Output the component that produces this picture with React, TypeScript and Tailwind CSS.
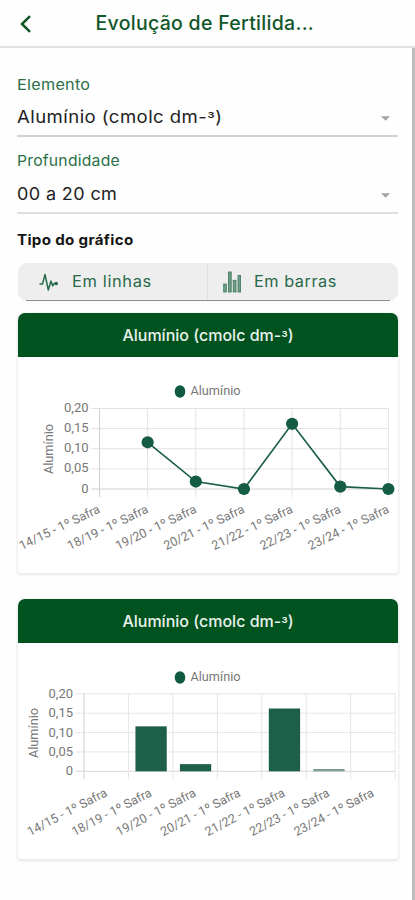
import { ReactNode } from 'react';

interface Entry {
    label: string;
    value: number | null;
}

const TICKS = ['0,20', '0,15', '0,10', '0,05', '0'];

const DATA: Entry[] = [
    { label: '14/15 - 1º Safra', value: null },
    { label: '18/19 - 1º Safra', value: 0.116 },
    { label: '19/20 - 1º Safra', value: 0.0185 },
    { label: '20/21 - 1º Safra', value: 0 },
    { label: '21/22 - 1º Safra', value: 0.162 },
    { label: '22/23 - 1º Safra', value: 0.006 },
    { label: '23/24 - 1º Safra', value: 0 },
];

function UnitTitle() {
    return <>Alumínio (cmolc dm-<span className="align-[-1.5px] text-[0.9em] leading-none">³</span>)</>;
}

function ElementField() {
    return (
        <div className="h-[62px] border-b-2 border-[#d2d2d2]">
            <div className="h-5 w-max origin-left scale-x-[1.08] text-[15px] leading-5 tracking-[0.25px] text-[#2b7049]">Elemento</div>
            <div className="mt-[11px] flex h-6 items-center justify-between pr-[8px] text-[#222]">
                <span className="origin-left scale-x-[1.09] text-[17px] tracking-[0.42px]"><UnitTitle /></span>
                <Caret />
            </div>
        </div>
    );
}

function DepthField() {
    return (
        <div className="h-[77px] border-b-2 border-[#dedede] pt-[14px]">
            <div className="h-5 w-max origin-left scale-x-[1.05] text-[15px] leading-5 tracking-[0.2px] text-[#2b7049]">Profundidade</div>
            <div className="mt-[12px] flex h-6 items-center justify-between pr-[8px] text-[#222]">
                <span className="origin-left scale-x-[1.06] text-[17px] tracking-[0.35px]">00 a 20 cm</span>
                <Caret />
            </div>
        </div>
    );
}

function Caret() {
    return (
        <svg width="9" height="5" viewBox="0 0 10 5">
            <path d="M0 0h10L5 5z" fill="#a3a3a3" />
        </svg>
    );
}

function ChartCard({ children }: { children: ReactNode }) {
    return (
        <section className="h-[260px] overflow-hidden rounded-t-[7px] rounded-b-[3px] bg-white shadow-[0_1px_3px_1px_rgba(0,0,0,0.09)]">
            <h2 className="flex h-[44px] items-center justify-center bg-[#00521f] text-[16px] font-medium text-[#e9f2ec]">
                <span><UnitTitle /></span>
            </h2>
            {children}
        </section>
    );
}

// legenda e titulo do eixo Y, iguais nos dois graficos
function Legend({ axisX, axisY }: { axisX: number; axisY: number }) {
    return (
        <>
            <ellipse cx="162" cy="34.5" rx="5.3" ry="6.2" fill="#0f5a41" />
            <text x="172.5" y="38" fontSize="13" textLength="50" lengthAdjust="spacingAndGlyphs">Alumínio</text>
            <text transform={`translate(${axisX} ${axisY}) rotate(-90)`} fontSize="12.5" textLength="50" lengthAdjust="spacingAndGlyphs">
                Alumínio
            </text>
        </>
    );
}

function LineChart() {
    const left = 81.5;
    const top = 51.5;
    const height = 80.5;
    const step = 48.15;
    const x = (i: number) => left + i * step;
    const y = (v: number) => top + height - (v / 0.2) * height;
    const points = DATA.map((d, i) => ({ x: x(i), y: d.value === null ? null : y(d.value) })).filter(p => p.y !== null);

    return (
        <svg width="380" height="216" viewBox="0 0 380 216" fill="#777" className="font-['Roboto',sans-serif]">
            <Legend axisX={34.5} axisY={117} />
            {TICKS.map((t, i) => (
                <g key={t}>
                    <path d={`M${left - 8} ${top + i * height / 4}H${x(6)}`} stroke={i === 4 ? '#d0d0d0' : '#e2e2e2'} />
                    <text x="70.5" y={top + i * height / 4 + 3.5} fontSize="13" textAnchor="end">{t}</text>
                </g>
            ))}
            {DATA.map((d, i) => (
                <g key={d.label}>
                    <path d={`M${x(i)} ${top}V${top + height + 8}`} stroke={i === 0 ? '#cfcfcf' : '#e2e2e2'} />
                    <text transform={`translate(${x(i) + 1.5} 155) rotate(-25.7)`} textAnchor="end" fontSize="12.5" textLength="88" lengthAdjust="spacingAndGlyphs">
                        {d.label}
                    </text>
                </g>
            ))}
            <polyline points={points.map(p => `${p.x},${p.y}`).join(' ')} fill="none" stroke="#1a5f46" strokeWidth="1.7" />
            {points.map(p => <circle key={p.x} cx={p.x} cy={p.y!} r="6.1" fill="#145c43" />)}
        </svg>
    );
}

function BarChart() {
    const left = 66;
    const top = 50.8;
    const height = 77.5;
    const step = 44.45;
    const x = (i: number) => left + i * step;

    return (
        <svg width="380" height="216" viewBox="0 0 380 216" fill="#777" className="font-['Roboto',sans-serif]">
            <Legend axisX={19.5} axisY={115} />
            {TICKS.map((t, i) => (
                <g key={t}>
                    <path d={`M${left - 8} ${top + i * height / 4}H${x(7)}`} stroke={i === 4 ? '#d8d8d8' : '#e6e6e6'} />
                    <text x="55" y={top + i * height / 4 + 4} fontSize="13" textAnchor="end">{t}</text>
                </g>
            ))}
            {[0, 1, 2, 3, 4, 5, 6, 7].map(i => (
                <path key={i} d={`M${x(i)} ${top}V${top + height + 8}`} stroke={i === 0 ? '#cfcfcf' : '#e6e6e6'} />
            ))}
            {DATA.map((d, i) => {
                const h = ((d.value ?? 0) / 0.2) * height;
                return (
                    <g key={d.label}>
                        {h > 0 && (
                            <rect x={x(i) + 7} y={top + height - h} width="31.3" height={h} fill={h < 4 ? '#7f9d90' : '#1d5f48'} />
                        )}
                        <text transform={`translate(${x(i) + 24} 152.5) rotate(-27.5)`} textAnchor="end" fontSize="12.5" textLength="88" lengthAdjust="spacingAndGlyphs">
                            {d.label}
                        </text>
                    </g>
                );
            })}
        </svg>
    );
}

export default function App() {
    return (
        <div className="flex h-[900px] w-[415px] flex-col overflow-hidden bg-[#fefefe] font-['Inter','Open_Sans',sans-serif]">
            <header className="flex h-[48px] shrink-0 items-center border-b-2 border-[#e2e2e2] pl-[20px]">
                <svg width="12" height="18" viewBox="0 0 12 18" fill="none" stroke="#0e552a" strokeWidth="2.5" className="relative top-px">
                    <path d="M10 1.2 2 9l8 7.8" />
                </svg>
                <h1 className="relative top-px ml-[63.5px] text-[19.5px] font-medium tracking-[0.29px] whitespace-nowrap text-[#12562c]">
                    Evolução de Fertilida...
                </h1>
            </header>

            <div className="flex min-h-0 flex-1">
                <main className="flex-1 pt-[27px] pl-[18px] pr-[13.5px]">
                    <div className="-ml-px">
                        <ElementField />
                        <DepthField />
                        <p className="mt-[16px] h-5 w-max origin-left scale-x-[1.08] text-[14px] leading-5 font-bold tracking-[0.3px] text-[#151515]">
                            Tipo do gráfico
                        </p>
                    </div>

                    {/* linhas / barras */}
                    <div className="mt-[13px] h-[38px] overflow-hidden rounded-[9px] bg-[#eeeeee]">
                        <div className="flex h-[37px] text-[15.5px] text-[#28694a]">
                            <button className="flex w-[190px] items-center border-r border-[#e0e0e0] pl-[21px]">
                                <svg width="20" height="20" viewBox="0 0 20 20" fill="none" stroke="#286c4e" strokeWidth="1.5" strokeLinejoin="round">
                                    <path d="M0.5 12h3L6 2.5l3.3 15.5L12 9l1.7 5 1.3-2.5h2" />
                                    <circle cx="17.2" cy="11.5" r="1.1" fill="#286c4e" />
                                </svg>
                                <span className="ml-[13px] origin-left scale-x-[1.06] tracking-[0.6px]">Em linhas</span>
                            </button>
                            <button className="flex flex-1 items-center pl-[15px]">
                                <svg width="19" height="22" viewBox="0 0 19 22" fill="#6f9d87" stroke="#3c765b" strokeWidth="0.8">
                                    <rect x="0.7" y="13" width="2.6" height="8" />
                                    <rect x="5.4" y="1" width="2.8" height="20" />
                                    <rect x="10.2" y="9.3" width="2.8" height="11.7" />
                                    <rect x="15" y="4.5" width="2.6" height="16.5" />
                                </svg>
                                <span className="ml-[12px] origin-left scale-x-[1.05] tracking-[0.5px]">Em barras</span>
                            </button>
                        </div>
                        <div className="mx-[8px] h-px bg-[#8a8f8d]" />
                    </div>

                    <div className="mt-[12px] flex flex-col gap-[26px]">
                        <ChartCard><LineChart /></ChartCard>
                        <ChartCard><BarChart /></ChartCard>
                    </div>
                </main>
                <div className="w-[3.5px] bg-[#bdbdbd]" />
            </div>
        </div>
    );
}
